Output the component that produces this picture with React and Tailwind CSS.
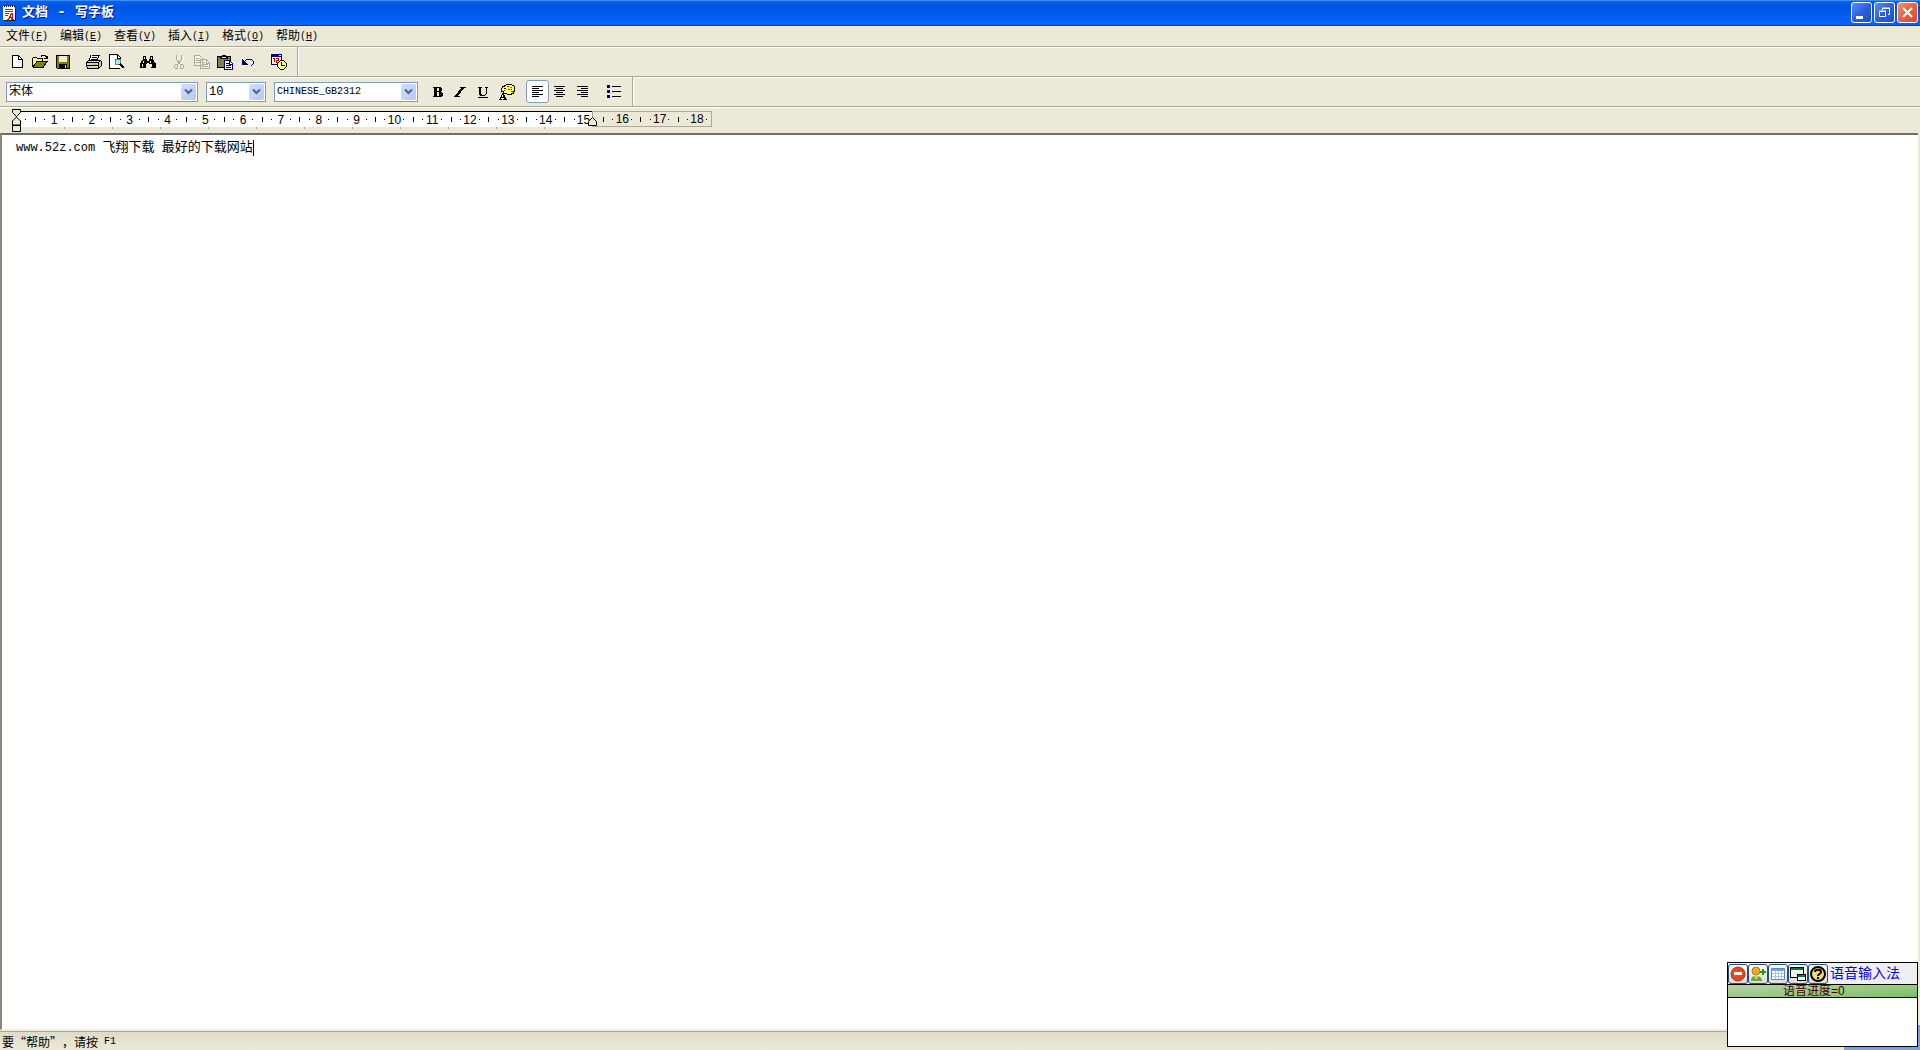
import { useState } from 'react';

const menus = [
  { label: '文件', key: 'F' },
  { label: '编辑', key: 'E' },
  { label: '查看', key: 'V' },
  { label: '插入', key: 'I' },
  { label: '格式', key: 'O' },
  { label: '帮助', key: 'H' },
];

const Icon = ({ children }) => (
  <svg width="16" height="16" viewBox="0 0 16 16" shapeRendering="crispEdges" fill="none" className="block shrink-0">
    {children}
  </svg>
);

const NewIcon = () => (
  <Icon>
    <path d="M3 2h6l4 3v9H3z" fill="#fff" />
    <path d="M3.500 1.500h6l4 4v8h-10zM9.500 1.500v4h4" stroke="#000" />
  </Icon>
);

const OpenIcon = () => (
  <Icon>
    <path d="M0 4h4v1h6v2H4L1 13H0z" fill="#ff6" />
    <path d="M5 8h10l-4 5H1z" fill="#808000" />
    <path d="M.5 13V4.500l1-1h3l1 1h5v3M.5 13.500h10.500l4-6H5l-4 5.500M9 2.500l1-1h3l1 1v2M12 4.500h3M15 2v3" stroke="#000" />
  </Icon>
);

const SaveIcon = () => (
  <Icon>
    <path d="M1 1h14v14H2l-1-1z" fill="#000" />
    <path d="M2 2h2v6h8V2h2v12H2z" fill="#808000" />
    <path d="M4 2h8v6H4z" fill="#ece9d8" />
    <path d="M4 10h8v5H4z" fill="#000" />
    <path d="M10 11h1v3h-1z" fill="#ece9d8" />
  </Icon>
);

const PrintIcon = () => (
  <Icon>
    <path d="M5 1h9l-3 6H3z" fill="#fff" />
    <path d="M1 8l2-2h12v6l-3 2H1z" fill="#d4d0c8" />
    <path d="M5.500 1.500h8l-3 5M5 1.500L2.500 7M6 3.500h5M5 5.500h5" stroke="#000" />
    <path d="M.5 8.500l2-2h12l1 1v4l-3 3H2l-1.500-2zM1 8.500h11l3-2M12.500 9v5M1 11.500h11" stroke="#000" />
    <path d="M8 10h3v1H8z" fill="#cc0" />
  </Icon>
);

const PreviewIcon = () => (
  <Icon>
    <path d="M1 1h8l3 3v10H1z" fill="#fff" />
    <path d="M.5 14.500v-14h8l3 3v3M8.500 1v3h3M1 14.500h10" stroke="#000" />
    <circle cx="9" cy="8" r="3" fill="#9ee" stroke="#808080" />
    <path d="M11 10l4 4" stroke="#000" strokeWidth="2" />
  </Icon>
);

const FindIcon = () => (
  <Icon>
    <path d="M3 2h3v3h1v2h2V5h1V2h3v3l3 5v4h-5v-4H9V9H7v1H6v4H0v-4l3-5z" fill="#000" />
    <path d="M4 3h1v2H4zM11 3h1v2h-1zM3 7h1v2H3zM2 10h1v3H2zM10 7h1v2h-1zM11 10h1v3h-1z" fill="#ece9d8" />
  </Icon>
);

const CutIcon = () => (
  <Icon>
    <path d="M6 2v4l5 9M12 2v4l-5 9" stroke="#fff" />
    <path d="M5.500 1v4L8 9l2 2M10.500 1v4L8 9l-2 2" stroke="#aca899" />
    <path d="M4.500 10.500h2v4h-2l-1-1v-2zM9.500 10.500h2l1 1v2l-1 1h-2z" stroke="#aca899" />
  </Icon>
);

const CopyIcon = () => (
  <Icon>
    <path d="M1 1h6l2 2v8H1zM7 5h6l3 3v7H7z" fill="#f5f3ea" />
    <path d="M.5 1.500h5l3 3v7h-8zM2 4.500h3M2 6.500h4M2 8.500h4" stroke="#aca899" />
    <path d="M6.500 5.500h6l3 3v6h-9zM8 8.500h3M8 10.500h6M8 12.500h6M12.500 6v3h3" stroke="#aca899" />
  </Icon>
);

const PasteIcon = () => (
  <Icon>
    <path d="M1 2h12v12H1z" fill="#808040" />
    <path d="M.5 2.500h13v11H.5z" stroke="#000" />
    <path d="M5 1h4v1h2v3H3V2h2z" fill="#000" />
    <path d="M5 3h4v1H5z" fill="#ff6" />
    <path d="M7.500 6.500h5l3 3v6h-8z" fill="#fff" stroke="#000080" />
    <path d="M9 9.500h3M9 11.500h5M9 13.500h5M12.500 7v3h3" stroke="#000080" />
  </Icon>
);

const UndoIcon = () => (
  <Icon>
    <path d="M2 5v6h6l-2-2-2-2z" fill="#000080" />
    <path d="M4 8l3-3h4l2 2v3l-2 2" stroke="#000080" />
  </Icon>
);

const DateIcon = () => (
  <Icon>
    <path d="M0 0h11v11H0z" fill="#000080" />
    <path d="M1 3h9v7H1z" fill="#fff" />
    <path d="M8 1h2v1H8z" fill="#fff" />
    <path d="M2 4h2v4H3V5H2zM5 4h3v3H6v1h2v1H5V6h2V5H5z" fill="#d00000" />
    <path d="M9 6h4v1h1v1h1v1h1v4h-1v1h-1v1h-1v1H9v-1H8v-1H7v-1H6V9h1V8h1V7h1z" fill="#000" />
    <path d="M9 7h4v1h1v1h1v4h-1v1h-1v1H9v-1H8v-1H7V9h1V8h1z" fill="#ffff80" />
    <path d="M10 8h1v3h3v1h-4z" fill="#000" />
  </Icon>
);

const ColorIcon = () => (
  <Icon>
    <path d="M7 0h6v1h2v1h1v6h-1v2h-2v1H8v-1H4V8H2V4h1V2h2V1h2z" fill="#000" />
    <path d="M7 1h6v1h2v5h-1v2h-2v1H8V9H5V7H3V4h1V3h2V2h1z" fill="#ffff66" />
    <path d="M8 2h2v1H8zM5 6h1v1H5z" fill="#d00000" />
    <path d="M11 3h2v1h-2z" fill="#808000" />
    <path d="M5 4h2v1H5zM12 5h1v1h-1z" fill="#0000c0" />
    <path d="M9 5h2v1H9zM12 7h2v1h-2z" fill="#c000c0" />
    <path d="M7 7h2v1H7z" fill="#fff" />
    <path d="M0 15h1v-2h1v-2h1V9h2v2h1v2h1v2h1v1H4v-1h1v-1H2v1h1v1H0zM3 11v2h1v-2z" fill="#000" fillRule="evenodd" />
  </Icon>
);

const BoldIcon = () => (
  <Icon>
    <path d="M3 3h8v1h1v3h-1v1h1v1h1v3h-1v1H3v-1h1V4H3zM7 4v3h2V4zM7 8v4h2V8z" fill="#000" fillRule="evenodd" />
  </Icon>
);

const ItalicIcon = () => (
  <Icon>
    <path d="M7 3h6v1h-2v1h-1v1H9v1H8v2H7v1H6v1H5v1h2v1H1v-1h1v-1h1v-1h1V9h1V7h1V6h1V5h1V4H7z" fill="#000" />
  </Icon>
);

const UnderlineIcon = () => (
  <Icon>
    <path d="M2 3h4v1H5v6h1v1h3v-1h1V4H9V3h3v1h-1v6h-1v1H9v1H4v-1H3V4H2zM2 13h10v1H2z" fill="#000" />
  </Icon>
);

const AlignLeftIcon = () => (
  <Icon>
    <path d="M2 2.500h11M2 4.500h7M2 6.500h11M2 8.500h7M2 10.500h11M2 12.500h7" stroke="#000" />
  </Icon>
);

const AlignCenterIcon = () => (
  <Icon>
    <path d="M1 2.500h11M3 4.500h7M1 6.500h11M3 8.500h7M1 10.500h11M3 12.500h7" stroke="#000" />
  </Icon>
);

const AlignRightIcon = () => (
  <Icon>
    <path d="M1 2.500h11M5 4.500h7M1 6.500h11M5 8.500h7M1 10.500h11M5 12.500h7" stroke="#000" />
  </Icon>
);

const BulletsIcon = () => (
  <Icon>
    <path d="M0 1h3v3H0zM0 6h3v3H0zM0 11h3v3H0z" fill="#000080" />
    <path d="M5 2.500h9M5 7.500h9M5 12.500h9" stroke="#000" />
  </Icon>
);

function ToolButton({ label, active, disabled, children }) {
  return (
    <button
      type="button"
      aria-label={label}
      disabled={disabled}
      className={`flex h-[23px] w-[23px] items-center justify-center rounded-[3px] border ${
        active ? 'border-[#7f9db9] bg-white' : 'border-transparent'
      }`}
    >
      {children}
    </button>
  );
}

function Combo({ label, value, options, width, mono }) {
  const [current, setCurrent] = useState(value);
  return (
    <div className={`relative h-5 ${width}`}>
      <select
        aria-label={label}
        value={current}
        onChange={(e) => setCurrent(e.target.value)}
        className={`block h-5 w-full appearance-none rounded-none border border-[#7f9db9] bg-white pl-[2px] leading-[18px] outline-none ${
          mono ? 'text-[10px]' : 'text-xs'
        }`}
      >
        {options.map((o) => (
          <option key={o}>{o}</option>
        ))}
      </select>
      <span className="pointer-events-none absolute top-[2px] right-[2px] flex h-4 w-[15px] items-center justify-center rounded-[2px] bg-linear-to-br from-[#d2defc] to-[#b4c8f6]">
        <svg width="9" height="7" viewBox="0 0 9 7" fill="none">
          <path d="M1 1.500l3.500 3.500L8 1.500" stroke="#4d6185" strokeWidth="2" />
        </svg>
      </span>
    </div>
  );
}

function TitleBar() {
  const base = 'flex h-[21px] w-[21px] items-center justify-center rounded-[3px] border border-white';
  return (
    <header className="flex h-[26px] items-center bg-linear-to-b from-[#0a63ee] via-[#0054e3] via-30% to-[#0366ff] pr-[2px] pb-px pl-[2px] shadow-[inset_0_1px_0_#3c8cf5,inset_0_-1px_0_#0040c0]">
      <svg width="14" height="16" viewBox="0 0 14 16" shapeRendering="crispEdges" fill="none" className="mr-[6px]">
        <path d="M1 1h12v14H1z" fill="#fff" />
        <path d="M13 2h1v14H2v-1h11z" fill="#222" />
        <path d="M2 0h1v2H2zM4 0h1v2H4zM6 0h1v2H6zM8 0h1v2H8zM10 0h1v2h-1zM12 0h1v2h-1z" fill="#222" />
        <path d="M3 4h8v1H3zM3 6h8v1H3zM3 8h4v1H3zM3 10h3v1H3z" fill="#3a4aa8" />
        <path d="M5 14h1v-1h1v-2h1V9h1V8h2v6h1v1H9v-2H8v1H7v1H5zM9 10v2h1v-2z" fill="#e01010" fillRule="evenodd" />
      </svg>
      <h1 className="text-[13px] leading-none font-bold whitespace-pre text-white [text-shadow:1px_1px_0_#0a1883]">
        文档<span className="text-[15px]"> - </span>写字板
      </h1>
      <div className="ml-auto flex gap-[2px]">
        <button type="button" aria-label="最小化" className={`${base} bg-linear-to-br from-[#5b8cf5] via-[#2a5fe0] to-[#1a4fd0]`}>
          <svg width="15" height="15" viewBox="0 0 15 15">
            <path d="M2 11h7v3H2z" fill="#fff" />
          </svg>
        </button>
        <button type="button" aria-label="向下还原" className={`${base} bg-linear-to-br from-[#5b8cf5] via-[#2a5fe0] to-[#1a4fd0]`}>
          <svg width="15" height="15" viewBox="0 0 15 15" fill="none" stroke="#fff">
            <path d="M5.500 5V3.500h7v6H11M5 3h8" />
            <path d="M2.500 6.500h6v5h-6zM2 6h7" />
          </svg>
        </button>
        <button type="button" aria-label="关闭" className={`${base} bg-linear-to-br from-[#f09078] via-[#e9603f] to-[#dc4a28]`}>
          <svg width="15" height="15" viewBox="0 0 15 15" fill="none">
            <path d="M3 3l9 9M12 3l-9 9" stroke="#fff" strokeWidth="2" />
          </svg>
        </button>
      </div>
    </header>
  );
}

function MenuBar() {
  return (
    <nav className="flex h-[21px] items-center gap-3 border-b border-[#aca899] pt-[2px] pl-[6px] shadow-[0_1px_0_#fff]">
      {menus.map((m) => (
        <button key={m.key} type="button" className="flex w-[42px] items-center text-xs leading-none whitespace-nowrap">
          {m.label}
          <span className="text-[10px]">
            (<u>{m.key}</u>)
          </span>
        </button>
      ))}
    </nav>
  );
}

// one slot per quarter centimetre: dot, tick, dot, number
function Slots({ from, to }) {
  const slots = [];
  for (let q = from; q <= to; q++) {
    slots.push(
      <span key={q} className="flex min-w-0 flex-1 items-center justify-center">
        {q % 4 === 0 ? (
          <span>{q / 4}</span>
        ) : q % 4 === 2 ? (
          <i className="h-[5px] w-px shrink-0 bg-black" />
        ) : (
          <i className="h-px w-px shrink-0 bg-black" />
        )}
      </span>
    );
  }
  return slots;
}

function Ruler() {
  return (
    <div className="relative h-[26px] pt-1 pl-4">
      <div className='flex h-4 font-["Liberation_Sans",sans-serif] text-[12px] leading-none'>
        <div className="flex w-[576px] border-t border-black bg-white pr-1 pl-[5px]">
          <Slots from={1} to={60} />
        </div>
        <div className="flex w-[120px] border border-[#aca899] pl-[6px]">
          <Slots from={62} to={73} />
        </div>
      </div>
      <div className="flex w-[529px] justify-between pl-12">
        {Array.from({ length: 11 }, (_, i) => (
          <i key={i} className="h-[2px] w-px bg-[#aca899]" />
        ))}
      </div>
      {/* indent markers */}
      <svg width="9" height="24" viewBox="0 0 9 24" fill="#ece9d8" stroke="#000" className="absolute top-[2px] left-3">
        <path d="M.5 .5h8v3l-4 4-4-4zM4.500 8l4 4v4h-8v-4zM.5 16.500h8v6h-8z" />
      </svg>
      <svg width="9" height="9" viewBox="0 0 9 9" fill="#ece9d8" stroke="#000" className="absolute top-[10px] left-[588px]">
        <path d="M4.500 .5l4 4v4h-8v-4z" />
      </svg>
    </div>
  );
}

function VoicePanel() {
  const btn = 'flex h-5 w-5 items-center justify-center rounded-[3px] border border-[#1c5180] bg-linear-to-b from-white to-[#dcdcd0]';
  return (
    <aside className="absolute right-[2px] bottom-[3px] w-[191px] border border-black bg-white">
      <div className="flex h-[21px] items-center bg-[#efefef]">
        <button type="button" aria-label="停止" className={btn}>
          <svg width="16" height="16" viewBox="0 0 16 16">
            <circle cx="8" cy="8" r="7" fill="#e04a20" stroke="#c02a10" />
            <path d="M4 6h8v3H4z" fill="#fff" />
          </svg>
        </button>
        <button type="button" aria-label="添加用户" className={btn}>
          <svg width="16" height="16" viewBox="0 0 16 16">
            <path d="M1 15c0-4 2-5 5-5s6 1 6 5z" fill="#5cae3c" />
            <path d="M4 10l2 4 3-4z" fill="#f4c060" />
            <circle cx="6" cy="5" r="4" fill="#f0a830" stroke="#b87818" />
            <path d="M13 3v6M10 6h6" stroke="#1a9a1a" strokeWidth="2" />
          </svg>
        </button>
        <button type="button" aria-label="表格" className={btn}>
          <svg width="16" height="16" viewBox="0 0 16 16" fill="none">
            <path d="M1.500 2.500h13v11h-13z" fill="#fff" stroke="#5a86c8" />
            <path d="M2 3h12v2H2z" fill="#7ba4e0" />
            <path d="M2 7.500h12M2 10.500h12M5.500 5v8M8.500 5v8M11.500 5v8" stroke="#a9c4ec" />
          </svg>
        </button>
        <button type="button" aria-label="窗口" className={btn}>
          <svg width="18" height="18" viewBox="0 0 18 18" shapeRendering="crispEdges" fill="none">
            <path d="M1.500 2.500h13v10h-13z" fill="#f4f4ee" stroke="#000" />
            <path d="M2 3h12v2H2z" fill="#087838" />
            <path d="M8.500 9.500h8v6h-8z" fill="#fff" stroke="#000" />
            <path d="M9 10h7v2H9z" fill="#087838" />
          </svg>
        </button>
        <button type="button" aria-label="帮助" className={btn}>
          <svg width="18" height="18" viewBox="0 0 18 18" fill="none">
            <circle cx="9" cy="9" r="7" fill="#ffd873" stroke="#000" strokeWidth="2" />
            <path d="M6 7c0-3 6-3 6 0 0 2-3 2-3 4" stroke="#000" strokeWidth="2" />
            <path d="M8 12h2v2H8z" fill="#000" />
          </svg>
        </button>
        <span className="ml-[2px] text-[14px] leading-none text-[#0000ff]">语音输入法</span>
      </div>
      <div className="flex h-[14px] items-center border-y border-black bg-linear-to-br from-[#b8d0b0] to-[#7dbf58] pl-[55px] text-xs leading-none text-[#400000]">
        <span className='font-["Liberation_Sans","Noto_Sans_CJK_SC",sans-serif]'>语音进度=0</span>
      </div>
      <div className="h-12" />
    </aside>
  );
}

export default function App() {
  return (
    <div className='relative flex h-screen flex-col overflow-hidden bg-[#ece9d8] font-["Liberation_Mono","Noto_Sans_CJK_SC",monospace] text-black'>
      <TitleBar />
      <MenuBar />

      {/* standard toolbar */}
      <div className="flex h-[30px] border-b border-[#aca899] shadow-[0_1px_0_#fff]">
        <div className="flex w-[298px] items-center border-r border-[#aca899] pl-[5px] shadow-[1px_0_0_#fff]">
          <ToolButton label="新建"><NewIcon /></ToolButton>
          <ToolButton label="打开"><OpenIcon /></ToolButton>
          <ToolButton label="保存"><SaveIcon /></ToolButton>
          <span className="w-2" />
          <ToolButton label="打印"><PrintIcon /></ToolButton>
          <ToolButton label="打印预览"><PreviewIcon /></ToolButton>
          <span className="w-2" />
          <ToolButton label="查找"><FindIcon /></ToolButton>
          <span className="w-2" />
          <ToolButton label="剪切" disabled><CutIcon /></ToolButton>
          <ToolButton label="复制" disabled><CopyIcon /></ToolButton>
          <ToolButton label="粘贴"><PasteIcon /></ToolButton>
          <ToolButton label="撤消"><UndoIcon /></ToolButton>
          <span className="w-2" />
          <ToolButton label="日期/时间"><DateIcon /></ToolButton>
        </div>
      </div>

      {/* format bar */}
      <div className="flex h-[30px] border-b border-[#aca899] shadow-[0_1px_0_#fff]">
        <div className="flex w-[633px] items-center border-r border-[#aca899] pl-[6px] shadow-[1px_0_0_#fff]">
          <Combo label="字体" value="宋体" options={['宋体', '黑体']} width="w-48" />
          <span className="w-2" />
          <Combo label="字号" value="10" options={['10', '12', '14']} width="w-[60px]" />
          <span className="w-2" />
          <Combo label="字符集" value="CHINESE_GB2312" options={['CHINESE_GB2312']} width="w-36" mono />
          <span className="w-2" />
          <ToolButton label="粗体"><BoldIcon /></ToolButton>
          <ToolButton label="斜体"><ItalicIcon /></ToolButton>
          <ToolButton label="下划线"><UnderlineIcon /></ToolButton>
          <ToolButton label="颜色"><ColorIcon /></ToolButton>
          <span className="w-2" />
          <ToolButton label="左对齐" active><AlignLeftIcon /></ToolButton>
          <ToolButton label="居中"><AlignCenterIcon /></ToolButton>
          <ToolButton label="右对齐"><AlignRightIcon /></ToolButton>
          <span className="w-2" />
          <ToolButton label="项目符号"><BulletsIcon /></ToolButton>
        </div>
      </div>

      <Ruler />

      <main className="mr-[2px] min-h-0 flex-1 border-t-2 border-b border-l-2 border-t-[#716f64] border-b-[#f1efe2] border-l-[#8a887c] bg-white">
        <div
          role="textbox"
          aria-label="文档内容"
          aria-multiline="true"
          contentEditable
          suppressContentEditableWarning
          className="h-full pt-[5px] pl-[14px] outline-none"
        >
          <p className="flex h-4 items-center text-[13px] leading-4 whitespace-pre">
            <span className="text-xs">www.52z.com </span>
            <span>飞翔下载</span>
            <span className="text-xs"> </span>
            <span>最好的下载网站</span>
            <span className="h-4 w-px bg-black" />
          </p>
        </div>
      </main>

      <footer className="mt-px flex h-[19px] items-center border-t border-[#aca899] bg-linear-to-b from-[#dedbc9] to-[#ece9d8] pt-px pl-[2px] text-xs leading-none whitespace-pre">
        <span className='font-["Noto_Sans_CJK_SC",sans-serif] [text-spacing-trim:space-all]'>要“帮助”，请按</span>
        <span className="text-[10px]"> F1</span>
      </footer>

      <div className="absolute right-0 bottom-0 h-[25px] w-[76px] bg-[#7b9fd8]" />
      <VoicePanel />
    </div>
  );
}
